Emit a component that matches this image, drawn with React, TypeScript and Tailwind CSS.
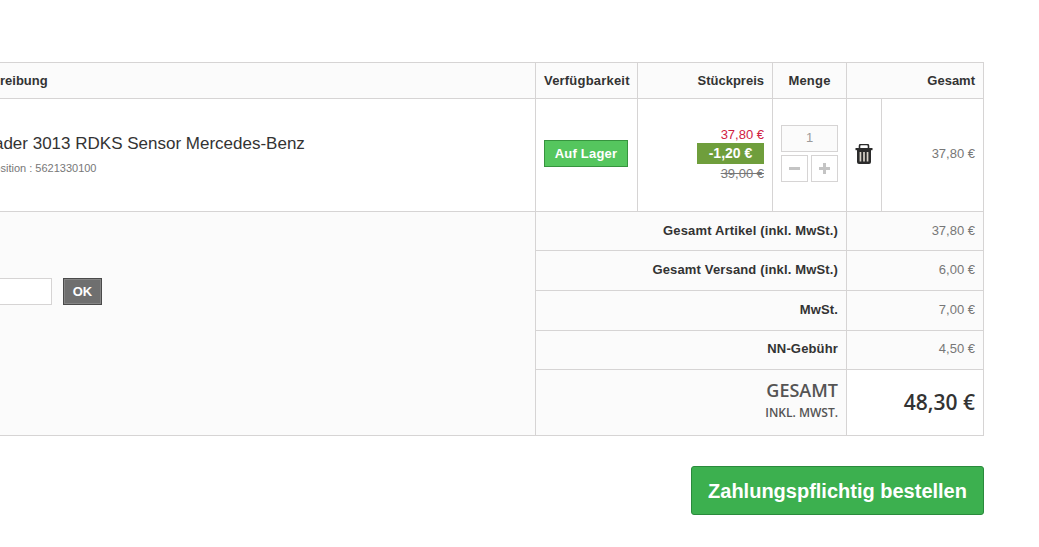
import React from 'react';

const th = 'border border-[#d6d4d4] bg-[#fbfbfb] px-2 text-[13px] font-bold text-[#333333]';
const labelCell = 'border border-[#d6d4d4] bg-[#fbfbfb] px-2 pb-[2px] text-right text-[13px] font-bold tracking-[0.15px] text-[#333333]';
const valueCell = 'border border-[#d6d4d4] bg-[#fbfbfb] px-2 pb-[2px] text-right text-[13px] text-[#777777]';

function SummaryRow({ label, value, height }: { label: string; value: string; height: string }) {
  return (
    <tr className={height}>
      <td colSpan={3} className={labelCell}>{label}</td>
      <td colSpan={2} className={valueCell}>{value}</td>
    </tr>
  );
}

function TrashIcon() {
  return (
    <svg viewBox="0 0 18 20" className="mx-auto block h-[20px] w-[18px]">
      <path d="M4.5 5V2a1.5 1.5 0 0 1 1.5-1.5h6A1.5 1.5 0 0 1 13.500 2v3" fill="none" stroke="#2b2b2b" strokeWidth="1.6" />
      <rect x="0.500" y="4" width="17" height="2.200" fill="#2b2b2b" />
      <path d="M2 6h14v12a2 2 0 0 1-2 2H4a2 2 0 0 1-2-2z" fill="#2b2b2b" />
      <rect x="4.600" y="8" width="1.700" height="9.500" fill="#d8d2c8" />
      <rect x="8.150" y="8" width="1.700" height="9.500" fill="#d8d2c8" />
      <rect x="11.700" y="8" width="1.700" height="9.500" fill="#d8d2c8" />
    </svg>
  );
}

export default function App() {
  return (
    <div className="h-screen overflow-hidden bg-white font-['Liberation_Sans',sans-serif]">
      <div className="ml-[-100px] w-[1084px] pt-[62px]">
        <table className="w-[1083px] table-fixed border-collapse">
          <colgroup>
            <col className="w-[635px]" />
            <col className="w-[102px]" />
            <col className="w-[135px]" />
            <col className="w-[74px]" />
            <col className="w-[35px]" />
            <col className="w-[102px]" />
          </colgroup>
          <thead>
            <tr className="h-[36px]">
              <th className={`${th} pl-[60px] text-left`}>Beschreibung</th>
              <th className={`${th} pr-[8px] pl-[8px] tracking-[0.2px]`}>Verfügbarkeit</th>
              <th className={`${th} text-right`}>Stückpreis</th>
              <th className={`${th} tracking-[0.2px]`}>Menge</th>
              <th colSpan={2} className={`${th} text-right`}>Gesamt</th>
            </tr>
          </thead>
          <tbody>
            <tr className="h-[113px]">
              <td className="border border-[#d6d4d4] bg-white pb-[3px] pl-[58px] align-middle">
                <div className="text-[17px] leading-[22px] text-[#333333]">Schrader 3013 RDKS Sensor Mercedes-Benz</div>
                <div className="mt-[6px] ml-[28px] text-[11px] leading-[14px] text-[#777777]">Position : 5621330100</div>
              </td>
              <td className="border border-[#d6d4d4] bg-white pr-[10px] pb-[3px] pl-2 text-center">
                <span className="inline-block h-[27px] w-[84px] border border-[#36943e] bg-[#55c65e] text-[13px] leading-[25px] font-bold tracking-[0.2px] text-white">
                  Auf Lager
                </span>
              </td>
              <td className="border border-[#d6d4d4] bg-white px-2 pb-[2px] text-right">
                <div className="mb-px text-[13px] leading-[15px] text-[#d0213f]">37,80 €</div>
                <div className="flex justify-end">
                  <span className="h-[21px] w-[67px] bg-[#6f9e3c] text-center text-[14px] leading-[21px] font-bold text-white">-1,20 €</span>
                </div>
                <div className="mt-[2px] text-[13px] leading-[15px] text-[#777777] line-through">39,00 €</div>
              </td>
              <td className="border border-[#d6d4d4] bg-white px-2 pb-[4px]">
                <div className="flex h-[27px] w-[57px] items-center justify-center border border-[#d6d4d4] bg-[#fbfbfb] text-[13px] text-[#9c9b9b]">1</div>
                <div className="mt-[3px] flex gap-[3px]">
                  <span className="flex h-[27px] w-[27px] items-center justify-center border border-[#d6d4d4] bg-white">
                    <span className="h-[3px] w-[11px] bg-[#c4c4c4]" />
                  </span>
                  <span className="relative flex h-[27px] w-[27px] items-center justify-center border border-[#d6d4d4] bg-white">
                    <span className="h-[3px] w-[11px] bg-[#c4c4c4]" />
                    <span className="absolute h-[11px] w-[3px] bg-[#c4c4c4]" />
                  </span>
                </div>
              </td>
              <td className="border border-[#d6d4d4] bg-white pb-[2px] text-center">
                <TrashIcon />
              </td>
              <td className="border border-[#d6d4d4] bg-white px-2 pb-[3px] text-right text-[13px] text-[#777777]">37,80 €</td>
            </tr>
            <tr className="h-[39px]">
              <td rowSpan={5} className="border border-[#d6d4d4] bg-[#fbfbfb] align-top">
                <div className="mt-[66px] flex items-center justify-end gap-[11px] pr-[433px]">
                  <input className="h-[27px] w-[120px] border border-[#d6d4d4] bg-white" />
                  <button className="h-[27px] w-[39px] border border-[#4a4a4a] bg-[#6f6f6f] text-[13px] font-bold text-white shadow-[inset_0_0_0_1px_#858585]">OK</button>
                </div>
              </td>
              <td colSpan={3} className={`${labelCell} pt-px pb-0`}>Gesamt Artikel (inkl. MwSt.)</td>
              <td colSpan={2} className={`${valueCell} pt-px pb-0`}>37,80 €</td>
            </tr>
            <SummaryRow height="h-[40px]" label="Gesamt Versand (inkl. MwSt.)" value="6,00 €" />
            <SummaryRow height="h-[40px]" label="MwSt." value="7,00 €" />
            <SummaryRow height="h-[39px]" label="NN-Gebühr" value="4,50 €" />
            <tr className="h-[66px]">
              <td colSpan={3} className="border border-[#d6d4d4] bg-[#fbfbfb] px-2 pb-[6px] text-right font-['Open_Sans',sans-serif] text-[#555454]">
                <div className="text-[18px] leading-[22px] font-semibold">GESAMT</div>
                <div className="mt-[4px] text-[12px] leading-[16px] font-semibold">INKL. MWST.</div>
              </td>
              <td colSpan={2} className="border border-[#d6d4d4] bg-white px-2 text-right font-['Open_Sans',sans-serif] text-[21px] font-semibold text-[#333333]">
                48,30 €
              </td>
            </tr>
          </tbody>
        </table>
        <div className="mt-[30px] flex justify-end">
          <button className="h-[49px] w-[293px] rounded-[3px] border border-[#2a8a3c] bg-[#3cb04f] text-[20px] font-bold text-white">
            Zahlungspflichtig bestellen
          </button>
        </div>
      </div>
    </div>
  );
}
